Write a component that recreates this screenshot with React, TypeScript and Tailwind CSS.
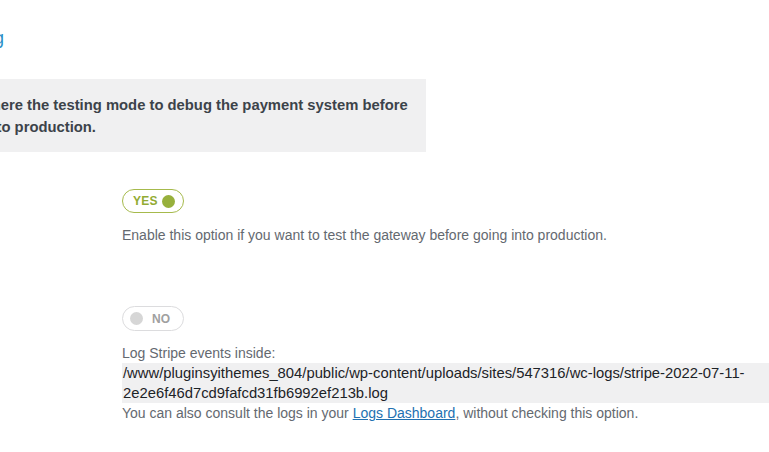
import React from "react";

type ToggleProps = {
  on: boolean;
};

function OnOff({ on }: ToggleProps) {
  if (on) {
    return (
      <div className="flex items-center justify-between w-[62px] h-[24px] rounded-full border-[1.5px] border-[#a6ba4c] pl-[10px] pr-[8px]">
        <span className="text-[12px] font-bold leading-none text-[#93ab33] tracking-[0.3px]">
          YES
        </span>
        <span className="w-[13px] h-[13px] rounded-full bg-[#97b03c]" />
      </div>
    );
  }
  return (
    <div className="flex items-center gap-[9px] w-[62px] h-[25px] rounded-full border border-[#dcdcde] pl-[7px]">
      <span className="w-[13px] h-[13px] rounded-full bg-[#d6d6d6]" />
      <span className="text-[12px] font-bold leading-none text-[#a0a0a0]">
        NO
      </span>
    </div>
  );
}

export default function App() {
  return (
    <div className="w-[769px] h-[452px] overflow-hidden bg-white font-['Liberation_Sans',Arial,sans-serif]">
      <div className="flex flex-col pt-[26px]">
        <a className="-ml-[200px] w-[204px] text-right text-[18px] leading-6 text-[#2a8fc7]">
          Testing &amp; Debug
        </a>
        <div className="mt-[29px] -ml-[80px] w-[506px] bg-[#f0f0f1] pl-[19px] pr-[10px] pt-[15px] pb-[14px]">
          <p className="text-[14.8px] font-bold leading-[22px] text-[#3c434a]">
            Enable here the testing mode to debug the payment system before
            <br />
            going into production.
          </p>
        </div>
        <div className="flex flex-col items-start pl-[122px] mt-[37px]">
          <OnOff on />
          <p className="mt-[12px] text-[14px] leading-5 text-[#646970]">
            Enable this option if you want to test the gateway before going into
            production.
          </p>
          <div className="mt-[61px]">
            <OnOff on={false} />
          </div>
          <p className="mt-[12px] text-[14px] leading-5 text-[#646970]">
            Log Stripe events inside:
          </p>
          <code className="block w-[660px] bg-[#f0f0f1] px-px font-['Liberation_Sans',Arial,sans-serif] text-[14.8px] leading-5 text-[#1d2327]">
            /www/pluginsyithemes_804/public/wp-content/uploads/sites/547316/wc-logs/stripe-2022-07-11-2e2e6f46d7cd9fafcd31fb6992ef213b.log
          </code>
          <p className="text-[14px] leading-5 text-[#646970]">
            You can also consult the logs in your{" "}
            <a className="text-[#2271b1] underline">Logs Dashboard</a>, without
            checking this option.
          </p>
        </div>
      </div>
    </div>
  );
}
